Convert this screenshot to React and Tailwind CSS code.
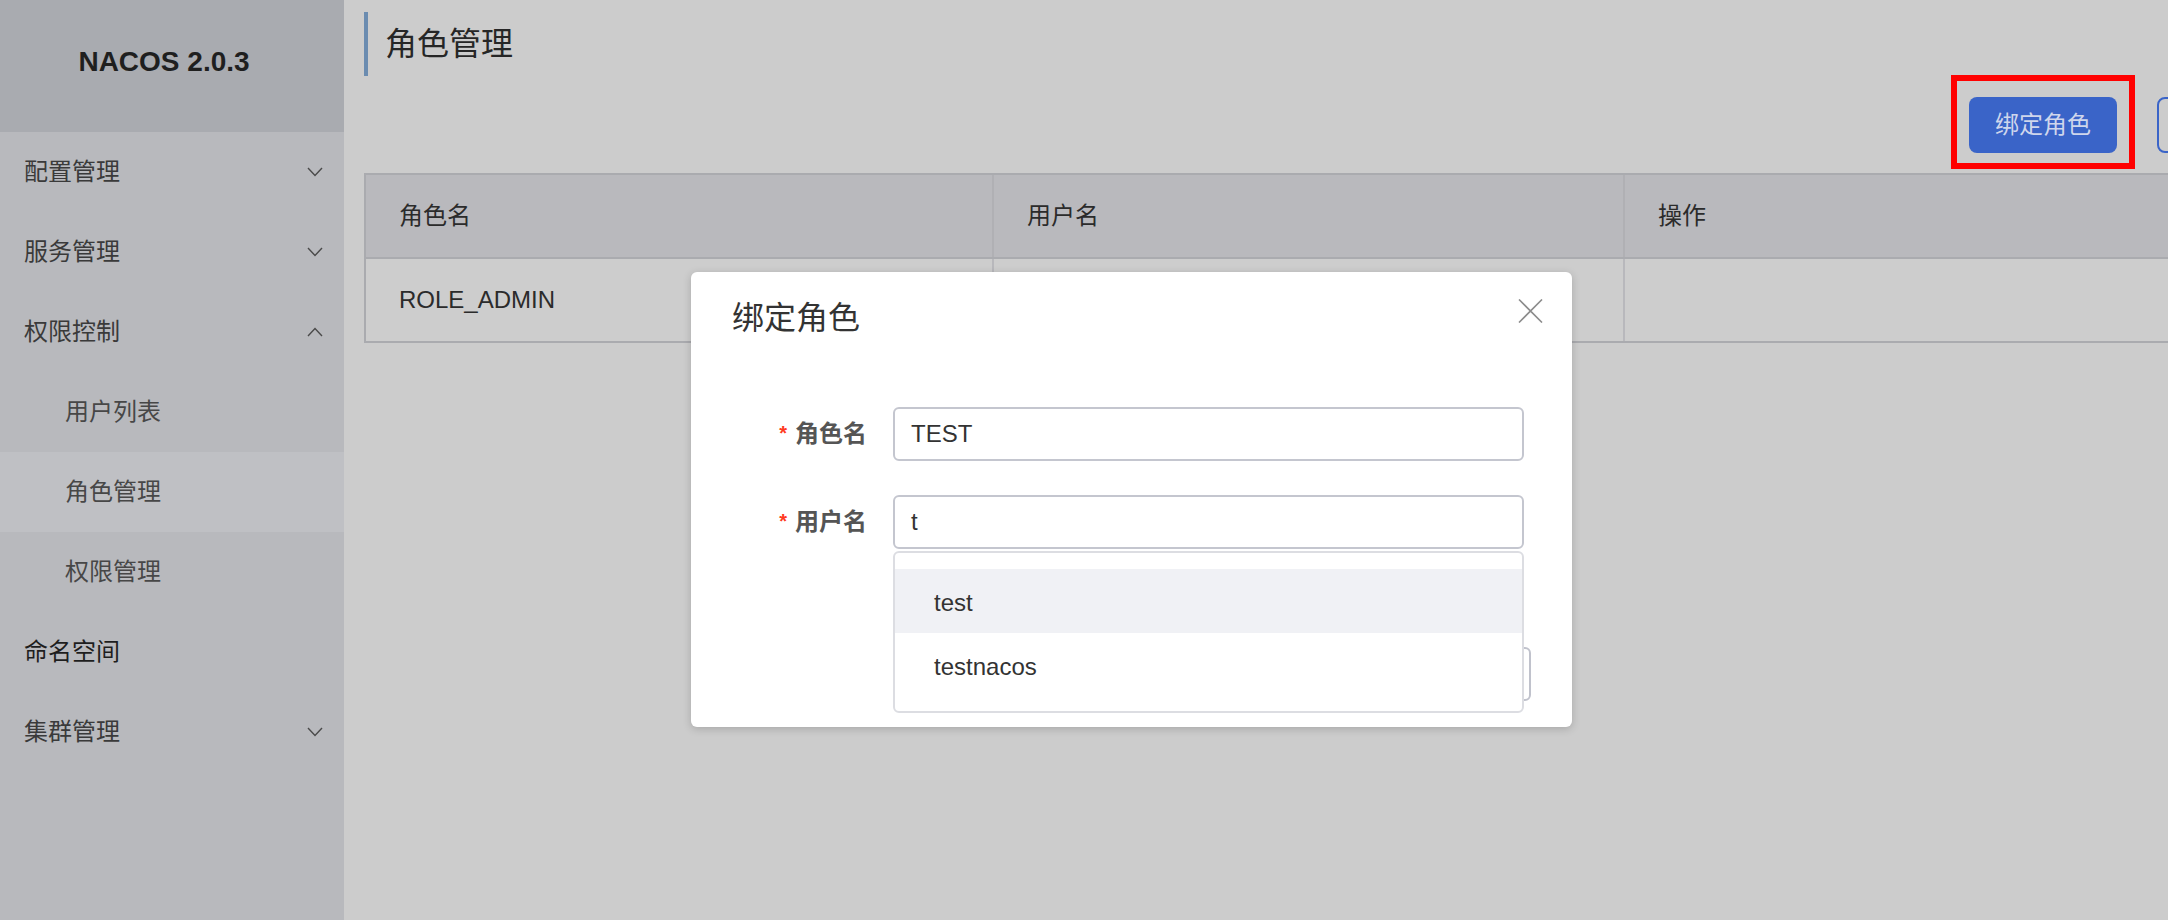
const font = { fontFamily: '"Liberation Sans", "Noto Sans CJK SC", sans-serif' };

const Chevron = ({ up }) => (
  <svg width="16" height="10" viewBox="0 0 16 10" fill="none">
    <polyline
      points={up ? '1,9 8,1.5 15,9' : '1,1 8,8.5 15,1'}
      stroke="#4a4a4a"
      strokeWidth="1.4"
    />
  </svg>
);

const NavItem = ({ label, chevron, sub, active, dark }) => (
  <div
    className={`h-[80px] flex items-center justify-between pr-[21px] text-[24px] ${
      sub ? 'pl-[65px] text-[#474747]' : 'pl-[24px]'
    } ${dark ? 'text-[#1e1e1e]' : sub ? '' : 'text-[#3a3a3a]'} ${active ? 'bg-[#bfc0c4]' : ''}`}
  >
    <span>{label}</span>
    {chevron && <Chevron up={chevron === 'up'} />}
  </div>
);

const Sidebar = () => (
  <div className="w-[344px] shrink-0 bg-[#b8b9bd] flex flex-col">
    <div className="h-[132px] bg-[#a9abb0] flex justify-center pr-[16px] pt-[48px]">
      <span className="text-[28px] leading-[28px] font-bold text-[#1f1f1f]">NACOS 2.0.3</span>
    </div>
    <NavItem label="配置管理" chevron="down" />
    <NavItem label="服务管理" chevron="down" />
    <NavItem label="权限控制" chevron="up" />
    <NavItem label="用户列表" sub />
    <NavItem label="角色管理" sub active />
    <NavItem label="权限管理" sub />
    <NavItem label="命名空间" dark />
    <NavItem label="集群管理" chevron="down" />
  </div>
);

const RoleTable = () => (
  <div className="mt-[20px] border-2 border-[#aaabaf] text-[24px] text-[#2b2b2b]">
    <div className="h-[84px] flex bg-[#b9b9bd] border-b-2 border-[#aaabaf]">
      <div className="w-[628px] flex items-center pl-[33px] border-r-2 border-[#b0b0b4]">角色名</div>
      <div className="w-[631px] flex items-center pl-[33px] border-r-2 border-[#b0b0b4]">用户名</div>
      <div className="flex-1 flex items-center pl-[33px]">操作</div>
    </div>
    <div className="h-[82px] flex bg-[#cdcdcd]">
      <div className="w-[628px] flex items-center pl-[33px] border-r-2 border-[#b8b8bc]">ROLE_ADMIN</div>
      <div className="w-[631px] border-r-2 border-[#b8b8bc]"></div>
      <div className="flex-1"></div>
    </div>
  </div>
);

const BindRoleDialog = () => (
  <div className="absolute left-[691px] top-[272px] w-[881px] h-[455px] bg-white rounded-[6px] shadow-[0_2px_8px_rgba(0,0,0,0.18)] flex flex-col">
    <div className="h-[90px] flex items-center pl-[41px] pt-[2px] text-[32px] text-[#333333]">绑定角色</div>
    <button className="absolute right-[29px] top-[27px] w-[25px] h-[24px]">
      <svg width="25" height="24" viewBox="0 0 25 24">
        <path d="M1 0.5 L24 23.5 M24 0.5 L1 23.5" stroke="#8c8c8c" strokeWidth="1.6" />
      </svg>
    </button>

    <div className="mt-[45px] flex flex-col gap-[34px]">
      {[
        ['角色名', 'TEST'],
        ['用户名', 't'],
      ].map(([label, value]) => (
        <div key={label} className="flex items-center">
          <div className="w-[176px] text-right text-[24px] font-bold text-[#555555]">
            <span className="text-[#ff3a1e] text-[20px] mr-[8px] align-[2px]">*</span>
            {label}
          </div>
          <div className="ml-[26px] w-[631px] h-[54px] border-2 border-[#c4c6cf] rounded-[6px] flex items-center pl-[16px] text-[24px] text-[#333333]">
            {value}
          </div>
        </div>
      ))}
    </div>

    <div className="mt-[98px] flex justify-end gap-[20px] pr-[41px]">
      <div className="w-[110px] h-[54px] rounded-[6px] bg-[#5584ff] text-white text-[24px] flex items-center justify-center">确定</div>
      <div className="w-[110px] h-[54px] rounded-[6px] border-2 border-[#c0c2cc] text-[#333] text-[24px] flex items-center justify-center">取消</div>
    </div>

    <div className="absolute left-[202px] top-[279px] w-[631px] h-[162px] bg-white border-2 border-[#dcdde2] rounded-[6px] pt-[16px] text-[24px] text-[#333333]">
      <div className="h-[64px] bg-[#f0f1f5] flex items-center pl-[39px] pt-[4px]">test</div>
      <div className="h-[64px] flex items-center pl-[39px] pt-[4px]">testnacos</div>
    </div>
  </div>
);

export default function App() {
  return (
    <div className="relative w-[2168px] h-[920px] overflow-hidden flex bg-[#cccccc]" style={font}>
      <Sidebar />
      <div className="flex-1 min-w-0 overflow-hidden">
        <div className="w-[1900px] ml-[20px]">
          <div className="pt-[12px]">
            <div className="h-[64px] border-l-4 border-[#6b8cb0] flex items-center pl-[17px] text-[32px] text-[#262626]">
              角色管理
            </div>
          </div>
          <div className="mt-[21px] h-[56px] flex justify-end gap-[40px]">
            <div className="relative">
              <div className="w-[148px] h-[56px] rounded-[8px] bg-[#3a64c8] text-[#cfd6ec] text-[24px] flex items-center justify-center">
                绑定角色
              </div>
              <div className="absolute -left-[18px] -top-[22px] w-[184px] h-[94px] border-[6px] border-[#ff0000]"></div>
            </div>
            <div className="w-[107px] h-[56px] rounded-[8px] border-2 border-[#3a64c8]"></div>
          </div>
          <RoleTable />
        </div>
      </div>
      <BindRoleDialog />
    </div>
  );
}
